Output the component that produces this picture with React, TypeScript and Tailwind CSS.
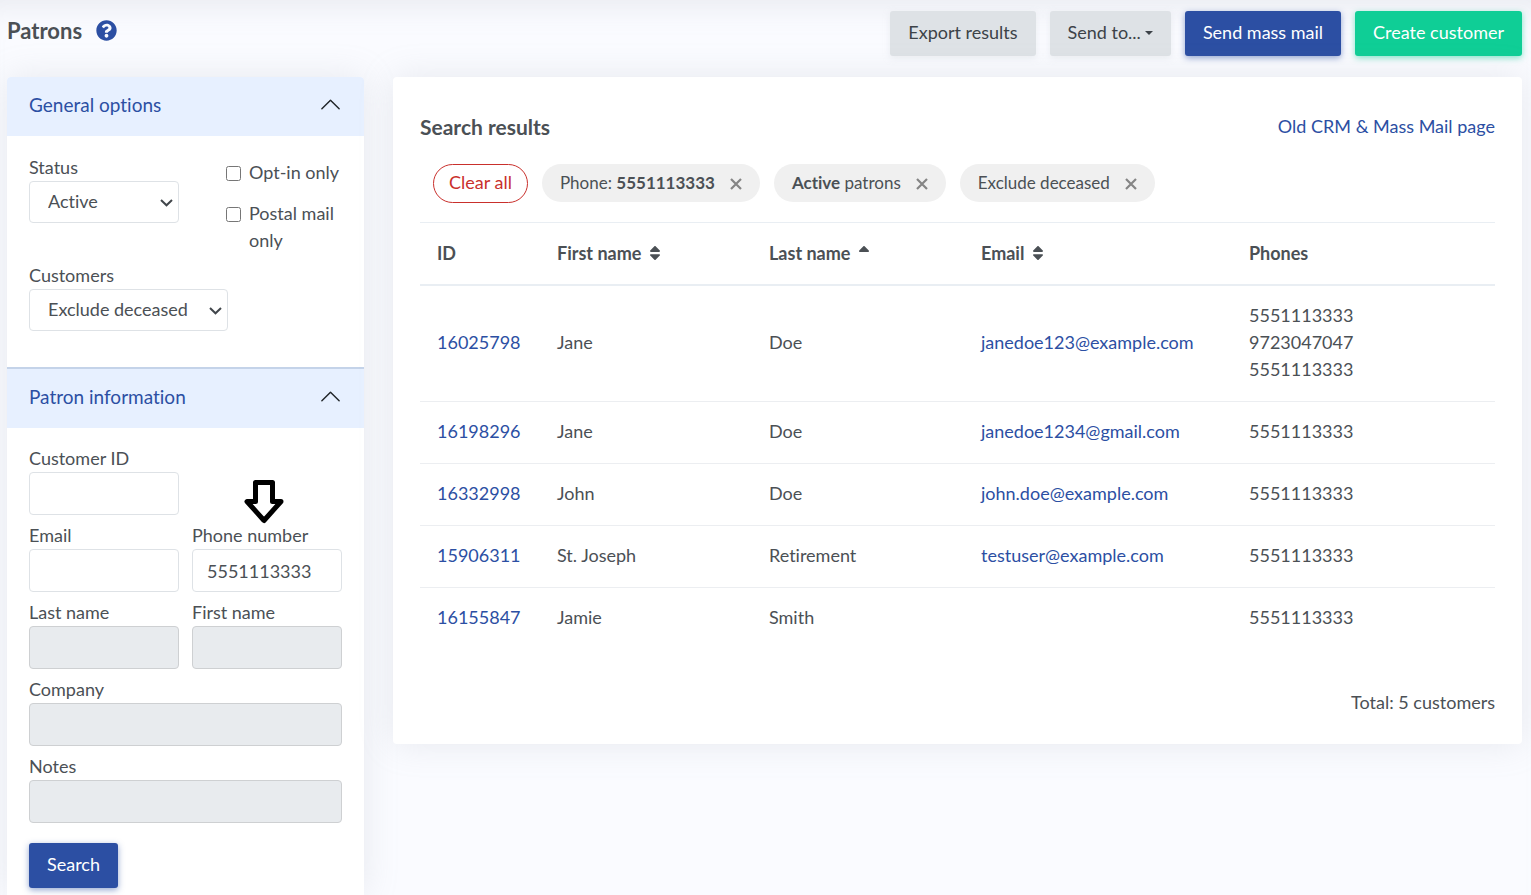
import { useState } from 'react';
import { FaQuestionCircle, FaSort, FaSortUp } from 'react-icons/fa';
import { BsChevronUp } from 'react-icons/bs';

const customers = [
  {
    id: '16025798',
    first: 'Jane',
    last: 'Doe',
    email: 'janedoe123@example.com',
    phones: ['5551113333', '9723047047', '5551113333'],
  },
  { id: '16198296', first: 'Jane', last: 'Doe', email: 'janedoe1234@gmail.com', phones: ['5551113333'] },
  { id: '16332998', first: 'John', last: 'Doe', email: 'john.doe@example.com', phones: ['5551113333'] },
  { id: '15906311', first: 'St. Joseph', last: 'Retirement', email: 'testuser@example.com', phones: ['5551113333'] },
  { id: '16155847', first: 'Jamie', last: 'Smith', email: '', phones: ['5551113333'] },
];

const button = 'h-[45px] rounded-[3px] px-[18px] pb-[2px] cursor-pointer';
const control = 'w-full rounded-[4px] border border-[#dee2e6] bg-white';
const labelText = 'pb-px leading-[26px]';

function Field({
  id,
  label,
  value = '',
  disabled = false,
  wide = false,
}: {
  id: string;
  label: string;
  value?: string;
  disabled?: boolean;
  wide?: boolean;
}) {
  return (
    <div className={wide ? 'col-span-2 flex flex-col' : 'flex flex-col'}>
      <label htmlFor={id} className={labelText}>
        {label}
      </label>
      <input
        id={id}
        type="text"
        defaultValue={value}
        disabled={disabled}
        className={`${control} h-[43px] px-[14px] disabled:border-[#ced0d2] disabled:bg-[#e8ebee]`}
      />
    </div>
  );
}

function Select({ id, label, options }: { id: string; label: string; options: string[] }) {
  return (
    <div className="flex flex-col">
      <label htmlFor={id} className={labelText}>
        {label}
      </label>
      <div className="relative">
        <select id={id} className={`${control} h-[42px] appearance-none pr-9 pb-[2px] pl-[18px]`}>
          {options.map((option) => (
            <option key={option}>{option}</option>
          ))}
        </select>
        <svg
          className="pointer-events-none absolute top-[18px] right-[6px]"
          width="13"
          height="8"
          viewBox="0 0 13 8"
          fill="none"
          stroke="#41464b"
          strokeWidth="2"
        >
          <path d="M1 1L6.5 6.3L12 1" />
        </svg>
      </div>
    </div>
  );
}

function SectionHeader({ title, open, onClick }: { title: string; open: boolean; onClick: () => void }) {
  return (
    <button
      type="button"
      onClick={onClick}
      aria-expanded={open}
      className="flex h-[59px] w-full cursor-pointer items-center justify-between bg-[#e7f0ff] px-[22px] pb-1 text-[19px] text-[#2c4fa3]"
    >
      {title}
      <BsChevronUp size={23} className={open ? 'text-[#212529]' : 'rotate-180 text-[#212529]'} />
    </button>
  );
}

function Chip({ children, onRemove }: { children: React.ReactNode; onRemove: () => void }) {
  return (
    <span className="flex h-[38px] items-center gap-[15px] rounded-full bg-[#f0f0f0] px-[18px] pb-[2px] text-[17px]">
      <span>{children}</span>
      <button type="button" aria-label="Remove filter" onClick={onRemove} className="cursor-pointer pt-[4px]">
        <svg width="12" height="12" viewBox="0 0 12 12" stroke="#858585" strokeWidth="2.2">
          <path d="M1 1L11 11M11 1L1 11" />
        </svg>
      </button>
    </span>
  );
}

export default function App() {
  const [generalOpen, setGeneralOpen] = useState(true);
  const [patronOpen, setPatronOpen] = useState(true);
  const [filters, setFilters] = useState(['phone', 'active', 'deceased']);

  const remove = (name: string) => setFilters((prev) => prev.filter((f) => f !== name));

  return (
    <div className="flex min-h-screen flex-col bg-[#fafbff] pr-[9px] pl-[7px] font-[Lato,'Open_Sans',sans-serif] text-[18px] leading-[27px] text-[#4b5055] shadow-[inset_0_30px_30px_-24px_rgba(154,161,171,0.18)] [font-variant-ligatures:none]">
      <header className="flex items-start justify-between pt-[11px] pb-[21px]">
        <div className="flex items-center gap-[14px] pt-[6px]">
          <h1 className="text-[22px] font-bold">Patrons</h1>
          <a href="#help" aria-label="Help" className="text-[#2c4fa3]">
            <FaQuestionCircle size={21} />
          </a>
        </div>
        <div className="flex gap-[14px]">
          <button type="button" className={`${button} bg-[#dee2e6] text-[#3c4248] shadow-[0_2px_6px_rgba(222,226,230,0.5)]`}>
            Export results
          </button>
          <button
            type="button"
            className={`${button} flex items-center gap-1 bg-[#dee2e6] text-[#3c4248] shadow-[0_2px_6px_rgba(222,226,230,0.5)]`}
          >
            Send to...
            <svg width="8" height="4" viewBox="0 0 8 4" fill="currentColor">
              <path d="M0 0H8L4 4Z" />
            </svg>
          </button>
          <button type="button" className={`${button} bg-[#2c4fa3] text-white shadow-[0_2px_6px_rgba(44,79,163,0.5)]`}>
            Send mass mail
          </button>
          <button type="button" className={`${button} bg-[#0fce96] text-white shadow-[0_2px_6px_rgba(15,206,150,0.5)]`}>
            Create customer
          </button>
        </div>
      </header>

      <div className="flex grow gap-[29px]">
        <aside className="w-[357px] shrink-0 overflow-hidden rounded-t-[4px] bg-white shadow-[0_0_35px_rgba(154,161,171,0.2)]">
          <SectionHeader title="General options" open={generalOpen} onClick={() => setGeneralOpen(!generalOpen)} />
          {generalOpen && (
            <div className="px-[22px] pt-[18px] pb-9">
              <div className="grid grid-cols-2 gap-x-[13px]">
                <Select id="status" label="Status" options={['Active', 'Inactive']} />
                <div className="flex flex-col gap-[14px] pt-[5px] pl-[34px]">
                  <label className="flex items-start gap-2 whitespace-nowrap">
                    <input type="checkbox" className="mt-[7px] size-[15px] shrink-0" />
                    Opt-in only
                  </label>
                  <label className="flex items-start gap-2">
                    <input type="checkbox" className="mt-[7px] size-[15px] shrink-0" />
                    Postal mail only
                  </label>
                </div>
              </div>
              <div className="mt-2 w-[199px]">
                <Select id="customers" label="Customers" options={['Exclude deceased', 'Include deceased']} />
              </div>
            </div>
          )}

          <div className="border-t-2 border-[#c4d3e9]">
            <SectionHeader title="Patron information" open={patronOpen} onClick={() => setPatronOpen(!patronOpen)} />
          </div>
          {patronOpen && (
            <form className="px-[22px] pt-[17px] pb-[7px]" onSubmit={(e) => e.preventDefault()}>
              <div className="grid grid-cols-2 gap-x-[13px] gap-y-[7px]">
                <Field id="customer-id" label="Customer ID" />
                <div className="col-start-1">
                  <Field id="email" label="Email" />
                </div>
                <div className="relative">
                  <Field id="phone" label="Phone number" value="5551113333" />
                  <svg
                    className="absolute -top-[42px] left-[52px]"
                    width="40"
                    height="44"
                    viewBox="0 0 40 44"
                    fill="#fff"
                    stroke="#000"
                    strokeWidth="5"
                    strokeLinejoin="round"
                  >
                    <path d="M11.5 2.5H28.5V21.5H37L20 40.5L3 21.5H11.5Z" />
                  </svg>
                </div>
                <Field id="last-name" label="Last name" disabled />
                <Field id="first-name" label="First name" disabled />
                <Field id="company" label="Company" disabled wide />
                <Field id="notes" label="Notes" disabled wide />
              </div>
              <button
                type="submit"
                className={`${button} mt-5 bg-[#2c4fa3] text-white shadow-[0_2px_6px_rgba(44,79,163,0.5)]`}
              >
                Search
              </button>
            </form>
          )}
        </aside>

        <main className="min-w-0 grow self-start rounded-[4px] bg-white px-[27px] pt-9 pb-7 shadow-[0_0_35px_rgba(154,161,171,0.2)]">
          <div className="flex items-center justify-between">
            <h2 className="text-[21px] font-bold">Search results</h2>
            <a href="#old-crm" className="text-[#2c4fa3]">
              Old CRM &amp; Mass Mail page
            </a>
          </div>

          <div className="mt-6 flex items-start gap-[14px] pb-[19px] pl-[13px]">
            <button
              type="button"
              onClick={() => setFilters([])}
              className="h-[39px] cursor-pointer rounded-full border border-[#c9302c] px-[15px] pb-[2px] text-[#c9302c]"
            >
              Clear all
            </button>
            {filters.includes('phone') && (
              <Chip onRemove={() => remove('phone')}>
                Phone: <b>5551113333</b>
              </Chip>
            )}
            {filters.includes('active') && (
              <Chip onRemove={() => remove('active')}>
                <b>Active</b> patrons
              </Chip>
            )}
            {filters.includes('deceased') && <Chip onRemove={() => remove('deceased')}>Exclude deceased</Chip>}
          </div>

          <table className="w-full table-fixed text-left">
            <thead>
              <tr className="h-[62px] border-t border-b-2 border-[#e9eef3]">
                <th className="w-[120px] px-[17px]">ID</th>
                <th className="w-[212px] px-[17px]">
                  <button type="button" className="flex cursor-pointer items-center gap-[5px] font-bold">
                    First name <FaSort size={18} />
                  </button>
                </th>
                <th className="w-[212px] px-[17px]">
                  <button type="button" className="flex cursor-pointer items-center gap-[5px] font-bold">
                    Last name <FaSortUp size={18} />
                  </button>
                </th>
                <th className="w-[268px] px-[17px]">
                  <button type="button" className="flex cursor-pointer items-center gap-[5px] font-bold">
                    Email <FaSort size={18} />
                  </button>
                </th>
                <th className="px-[17px]">Phones</th>
              </tr>
            </thead>
            <tbody>
              {customers.map((c) => (
                <tr key={c.id} className="border-b border-[#eceef1] last:border-b-0">
                  <td className="px-[17px] pt-4 pb-[18px]">
                    <a href={`#${c.id}`} className="text-[#2c4fa3]">
                      {c.id}
                    </a>
                  </td>
                  <td className="px-[17px] pt-4 pb-[18px]">{c.first}</td>
                  <td className="px-[17px] pt-4 pb-[18px]">{c.last}</td>
                  <td className="px-[17px] pt-4 pb-[18px]">
                    {c.email && (
                      <a href={`mailto:${c.email}`} className="text-[#2c4fa3]">
                        {c.email}
                      </a>
                    )}
                  </td>
                  <td className="px-[17px] pt-4 pb-[18px]">
                    {c.phones.map((phone, idx) => (
                      <div key={idx}>{phone}</div>
                    ))}
                  </td>
                </tr>
              ))}
            </tbody>
          </table>

          <p className="mt-10 text-right">Total: 5 customers</p>
        </main>
      </div>
    </div>
  );
}
